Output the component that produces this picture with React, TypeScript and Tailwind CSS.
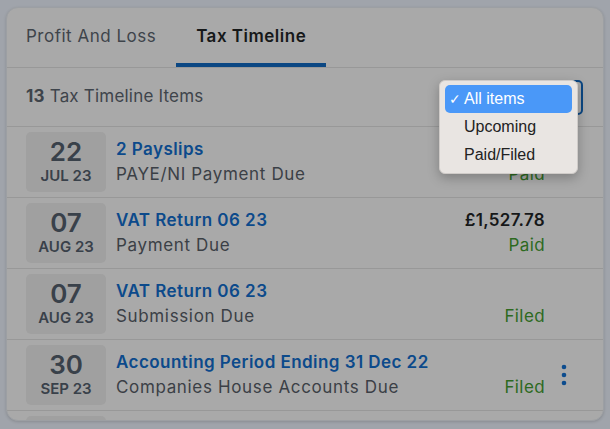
import { Fragment } from "react";

type Item = {
  day: string;
  month: string;
  title: string;
  subtitle: string;
  amount?: string;
  status: string;
  menu?: boolean;
};

const items: Item[] = [
  { day: "22", month: "JUL 23", title: "2 Payslips", subtitle: "PAYE/NI Payment Due", status: "Paid" },
  { day: "07", month: "AUG 23", title: "VAT Return 06 23", subtitle: "Payment Due", amount: "£1,527.78", status: "Paid" },
  { day: "07", month: "AUG 23", title: "VAT Return 06 23", subtitle: "Submission Due", status: "Filed" },
  { day: "30", month: "SEP 23", title: "Accounting Period Ending 31 Dec 22", subtitle: "Companies House Accounts Due", status: "Filed", menu: true },
  // next row is cut off by the card's bottom edge
  { day: "", month: "", title: "", subtitle: "", status: "" },
];

function Kebab() {
  return (
    <svg width="6" height="22" viewBox="0 0 6 22" className="text-[#0c4c8e]">
      <circle cx="3" cy="3" r="2.3" fill="currentColor" />
      <circle cx="3" cy="11" r="2.3" fill="currentColor" />
      <circle cx="3" cy="19" r="2.3" fill="currentColor" />
    </svg>
  );
}

export default function App() {
  return (
    <div className="min-h-[429px] w-[610px] overflow-hidden bg-[#a0a4ab] pt-[7px] pl-[6px] font-['Inter',sans-serif]">
      <div className="relative h-[414px] w-[598px] overflow-hidden rounded-xl border border-[#9c9fa3] bg-[#a9a9a9] shadow-[0_1px_3px_rgba(0,0,0,0.15)]">
        {/* tabs */}
        <div className="flex h-[60px] border-b border-[#989898]">
          <div className="flex items-center pl-[19px] pr-5 pb-[2px] text-[17px] tracking-[0.5px] text-[#3e444b]">Profit And Loss</div>
          <div className="flex items-center border-b-4 border-[#0b4783] px-5 pt-[2px] text-[17px] font-semibold tracking-[0.5px] text-[#161819]">
            Tax Timeline
          </div>
        </div>

        {/* header */}
        <div className="flex h-[59px] items-center justify-between border-b border-[#989898] pl-[19px] pr-[20px]">
          <div className="text-[17px] tracking-[0.2px] text-[#3e444b]">
            <span className="font-bold">13</span> Tax Timeline Items
          </div>
          <div className="h-[35px] w-[135px] rounded-[5px] border-2 border-[#0b4783]" />
        </div>

        {/* rows */}
        {items.map((it, i) => (
          <Fragment key={i}>
            <div className="flex h-[71px] items-center border-b border-[#989898] pl-[19px] pr-[20px]">
              <div className="flex h-[60px] w-[80px] shrink-0 flex-col items-center justify-center rounded-[5px] bg-[#a0a0a0] text-[#39414a]">
                <div className="text-[26px] font-semibold leading-[26px]">{it.day}</div>
                <div className="mt-[1px] text-[15px] font-semibold leading-[20px]">{it.month}</div>
              </div>
              <div className="ml-[10px] flex min-w-0 flex-1 flex-col">
                <div className="text-[17px] font-semibold leading-[25px] tracking-[0.45px] text-[#0c4a8b]">{it.title}</div>
                <div className="text-[17px] leading-[25px] tracking-[0.65px] text-[#3b4046]">{it.subtitle}</div>
              </div>
              <div className="flex flex-col items-end">
                <div className="h-[25px] text-[17px] font-semibold leading-[25px] tracking-[0.3px] text-[#161819]">{it.amount}</div>
                <div className="h-[25px] text-[17px] leading-[25px] tracking-[0.4px] text-[#2d6a1f]">{it.status}</div>
              </div>
              <div className="flex w-[38px] shrink-0 justify-center">{it.menu && <Kebab />}</div>
            </div>
          </Fragment>
        ))}
      </div>

      {/* native select popup */}
      <div className="absolute left-[439px] top-[80px] w-[139px] rounded-[6px] border border-[#cfcbc8] bg-[#e9e5e2] px-[5px] py-[4px] shadow-[0_4px_12px_rgba(0,0,0,0.25)] font-['Liberation_Sans',sans-serif]">
        <div className="flex h-[28px] items-center rounded-[5px] bg-[#4a98f8] text-[16px] text-white">
          <span className="w-[19px] pl-[4px] text-[14px]">✓</span>
          <span>All items</span>
        </div>
        <div className="flex h-[28px] items-center pl-[19px] text-[16px] text-[#222222]">Upcoming</div>
        <div className="flex h-[28px] items-center pl-[19px] text-[16px] text-[#222222]">Paid/Filed</div>
      </div>
    </div>
  );
}
